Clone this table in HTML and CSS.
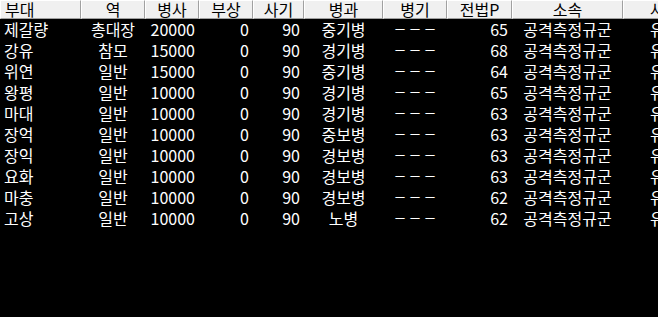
FILE: index.html
```html
<!DOCTYPE html>
<html lang="ko">
<head>
<meta charset="utf-8">
<link rel="stylesheet" href="styles.css">
</head>
<body>
<div class="list">
  <div class="row head">
    <div class="c l">부대</div><div class="c">역</div><div class="c">병사</div><div class="c">부상</div><div class="c">사기</div><div class="c">병과</div><div class="c">병기</div><div class="c">전법P</div><div class="c">소속</div><div class="c">사령관</div>
  </div>
  <div class="row"><div class="c l">제갈량</div><div class="c">총대장</div><div class="c r">20000</div><div class="c r">0</div><div class="c r">90</div><div class="c">중기병</div><div class="c dash">———</div><div class="c r">65</div><div class="c">공격측정규군</div><div class="c">유비군</div></div>
  <div class="row"><div class="c l">강유</div><div class="c">참모</div><div class="c r">15000</div><div class="c r">0</div><div class="c r">90</div><div class="c">경기병</div><div class="c dash">———</div><div class="c r">68</div><div class="c">공격측정규군</div><div class="c">유비군</div></div>
  <div class="row"><div class="c l">위연</div><div class="c">일반</div><div class="c r">15000</div><div class="c r">0</div><div class="c r">90</div><div class="c">중기병</div><div class="c dash">———</div><div class="c r">64</div><div class="c">공격측정규군</div><div class="c">유비군</div></div>
  <div class="row"><div class="c l">왕평</div><div class="c">일반</div><div class="c r">10000</div><div class="c r">0</div><div class="c r">90</div><div class="c">경기병</div><div class="c dash">———</div><div class="c r">65</div><div class="c">공격측정규군</div><div class="c">유비군</div></div>
  <div class="row"><div class="c l">마대</div><div class="c">일반</div><div class="c r">10000</div><div class="c r">0</div><div class="c r">90</div><div class="c">경기병</div><div class="c dash">———</div><div class="c r">63</div><div class="c">공격측정규군</div><div class="c">유비군</div></div>
  <div class="row"><div class="c l">장억</div><div class="c">일반</div><div class="c r">10000</div><div class="c r">0</div><div class="c r">90</div><div class="c">중보병</div><div class="c dash">———</div><div class="c r">63</div><div class="c">공격측정규군</div><div class="c">유비군</div></div>
  <div class="row"><div class="c l">장익</div><div class="c">일반</div><div class="c r">10000</div><div class="c r">0</div><div class="c r">90</div><div class="c">경보병</div><div class="c dash">———</div><div class="c r">63</div><div class="c">공격측정규군</div><div class="c">유비군</div></div>
  <div class="row"><div class="c l">요화</div><div class="c">일반</div><div class="c r">10000</div><div class="c r">0</div><div class="c r">90</div><div class="c">경보병</div><div class="c dash">———</div><div class="c r">63</div><div class="c">공격측정규군</div><div class="c">유비군</div></div>
  <div class="row"><div class="c l">마충</div><div class="c">일반</div><div class="c r">10000</div><div class="c r">0</div><div class="c r">90</div><div class="c">경보병</div><div class="c dash">———</div><div class="c r">62</div><div class="c">공격측정규군</div><div class="c">유비군</div></div>
  <div class="row"><div class="c l">고상</div><div class="c">일반</div><div class="c r">10000</div><div class="c r">0</div><div class="c r">90</div><div class="c">노병</div><div class="c dash">———</div><div class="c r">62</div><div class="c">공격측정규군</div><div class="c">유비군</div></div>
</div>
</body>
</html>
```
FILE: styles.css
```css
html, body {
  margin: 0;
  padding: 0;
  background: #000;
  overflow: hidden;
}
.list {
  width: 658px;
  height: 317px;
  overflow: hidden;
  font-family: "Noto Sans CJK KR", "Noto Sans", sans-serif;
  font-size: 16px;
}
.row {
  display: grid;
  grid-template-columns: 81px 64px 54px 54px 51px 79px 64px 65px 111px 98px;
  height: 21px;
  line-height: 21px;
  color: #fff;
  white-space: nowrap;
}
.c {
  text-align: center;
  padding: 0 4px;
}
.c.l { text-align: left; }
.c.r { text-align: right; }
.dash {
  font-family: "Noto Sans", sans-serif;
  font-size: 10px;
  letter-spacing: 5px;
  text-indent: 5px;
  padding-top: 0;
  line-height: 18px;
}
.row.head {
  height: 19px;
  line-height: 17px;
  color: #000;
}
.head .c {
  background: #f0f0f0;
  border-top: 1px solid #fff;
  border-left: 1px solid #fff;
  border-right: 1px solid #a0a0a0;
  border-bottom: 1px solid #a0a0a0;
  box-shadow: 1px 0 0 #696969;
  height: 19px;
  box-sizing: border-box;
}
```
